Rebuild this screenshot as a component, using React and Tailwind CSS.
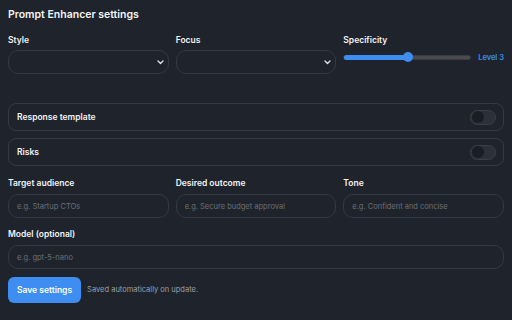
import { useState } from 'react';

const font = { fontFamily: 'Inter, "Noto Sans", sans-serif' };

const Chevron = () => (
  <svg width="7" height="5" viewBox="0 0 7 5" fill="none" className="text-gray-200">
    <path d="M1 1L3.5 3.5L6 1" stroke="currentColor" strokeWidth="1.3" strokeLinecap="round" strokeLinejoin="round" />
  </svg>
);

const Label = ({ children }) => (
  <div className="text-[8.5px] leading-[14px] font-semibold text-gray-100">{children}</div>
);

const Select = () => (
  <div className="mt-[3px] h-6 rounded-[10px] border border-[#343944] flex items-center justify-end pr-[4px]">
    <Chevron />
  </div>
);

const TextInput = ({ placeholder, className = '' }) => (
  <input
    placeholder={placeholder}
    className={`w-full h-6 rounded-[10px] border border-[#343944] bg-transparent px-[8px] text-[7.5px] text-gray-200 placeholder:text-[#6b7079] outline-none ${className}`}
    style={font}
  />
);

const ToggleRow = ({ label }) => {
  const [on, setOn] = useState(false);
  return (
    <div className="h-7 rounded-[8px] border border-[#343944] flex items-center justify-between pl-[8px] pr-[7px]">
      <span className="text-[8.5px] font-semibold text-gray-100">{label}</span>
      <button
        onClick={() => setOn(!on)}
        className="w-[26px] h-[15px] rounded-full bg-[#2c3039] border border-[#3a3f4a] flex items-center px-[1px]"
      >
        <span className="w-[12px] h-[12px] rounded-full bg-[#1a1d24]" />
      </button>
    </div>
  );
};

export default function App() {
  return (
    <div className="w-[512px] h-[320px] bg-[#1f232b] px-2 pt-[6px]" style={font}>
      <h1 className="text-[10.5px] leading-[17px] font-semibold text-gray-100">Prompt Enhancer settings</h1>

      {/* Style / Focus / Specificity */}
      <div className="mt-[10px] grid grid-cols-3 gap-[7px]">
        <div>
          <Label>Style</Label>
          <Select />
        </div>
        <div>
          <Label>Focus</Label>
          <Select />
        </div>
        <div>
          <Label>Specificity</Label>
          <div className="mt-[5px] flex items-center gap-[7px]">
            <div className="relative flex-1 h-[5px] rounded-full bg-[#4a4b4e] border border-[#3a3b3f]">
              <div className="absolute left-0 top-[-1px] h-[5px] w-[63px] rounded-full bg-[#3d8ef0]" />
              <div className="absolute left-[59px] top-[-4px] w-[10px] h-[10px] rounded-full bg-[#3d8ef0]" />
            </div>
            <span className="text-[7.5px] font-semibold text-[#3d8ef0]">Level 3</span>
          </div>
        </div>
      </div>

      {/* Toggles */}
      <div className="mt-[29px] flex flex-col gap-[7px]">
        <ToggleRow label="Response template" />
        <ToggleRow label="Risks" />
      </div>

      {/* Audience / Outcome / Tone */}
      <div className="mt-[10px] grid grid-cols-3 gap-[7px]">
        <div>
          <Label>Target audience</Label>
          <TextInput className="mt-1" placeholder="e.g. Startup CTOs" />
        </div>
        <div>
          <Label>Desired outcome</Label>
          <TextInput className="mt-1" placeholder="e.g. Secure budget approval" />
        </div>
        <div>
          <Label>Tone</Label>
          <TextInput className="mt-1" placeholder="e.g. Confident and concise" />
        </div>
      </div>

      <div className="mt-[9px]">
        <Label>Model (optional)</Label>
        <TextInput className="mt-1" placeholder="e.g. gpt-5-nano" />
      </div>

      <div className="mt-2 flex items-center gap-[6px]">
        <button className="h-[26px] px-[9px] rounded-[6px] bg-[#3d8ef0] text-white text-[8.5px] font-semibold">
          Save settings
        </button>
        <span className="text-[7.5px] text-[#9aa0aa]">Saved automatically on update.</span>
      </div>
    </div>
  );
}
